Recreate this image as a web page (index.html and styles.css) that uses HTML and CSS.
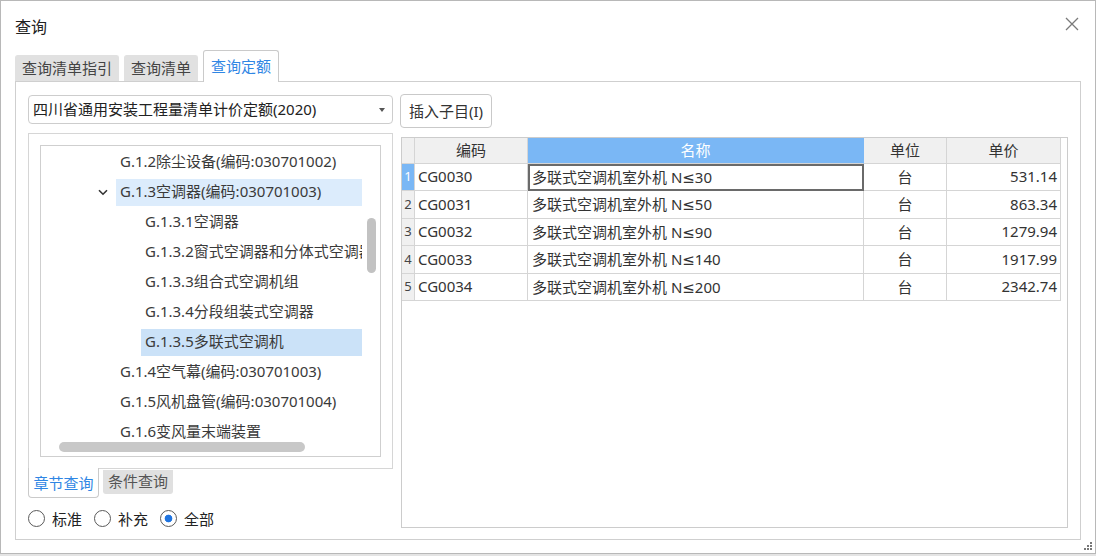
FILE: index.html
```html
<!DOCTYPE html>
<html lang="zh-CN">
<head>
    <meta charset="UTF-8">
    <meta name="viewport" content="width=device-width, initial-scale=1.0">
    <title>查询</title>
    <link rel="stylesheet" href="styles.css">
</head>
<body>
    <div class="dialog">
        <div class="titlebar">
            <span class="title">查询</span>
            <svg class="close" width="14" height="14" viewBox="0 0 14 14">
                <path d="M1 1 L13 13 M13 1 L1 13" stroke="#7a7a7a" stroke-width="1.3" fill="none"/>
            </svg>
        </div>

        <div class="tabs">
            <div class="tab">查询清单指引</div>
            <div class="tab">查询清单</div>
            <div class="tab active">查询定额</div>
        </div>

        <div class="panel">
            <div class="left">
                <div class="select">
                    <span>四川省通用安装工程量清单计价定额(2020)</span>
                    <span class="caret"></span>
                </div>

                <div class="tree-box">
                    <div class="tree">
                        <div class="tree-view">
                            <div class="node lv2"><span class="toggle"></span><span class="label">G.1.2除尘设备(编码:030701002)</span></div>
                            <div class="node lv2">
                                <span class="toggle">
                                    <svg width="10" height="7" viewBox="0 0 10 7"><path d="M1 1.2 L5 5.2 L9 1.2" stroke="#333" stroke-width="1.6" fill="none"/></svg>
                                </span>
                                <span class="label open">G.1.3空调器(编码:030701003)</span>
                            </div>
                            <div class="node lv3"><span class="toggle"></span><span class="label">G.1.3.1空调器</span></div>
                            <div class="node lv3"><span class="toggle"></span><span class="label">G.1.3.2窗式空调器和分体式空调器</span></div>
                            <div class="node lv3"><span class="toggle"></span><span class="label">G.1.3.3组合式空调机组</span></div>
                            <div class="node lv3"><span class="toggle"></span><span class="label">G.1.3.4分段组装式空调器</span></div>
                            <div class="node lv3"><span class="toggle"></span><span class="label selected">G.1.3.5多联式空调机</span></div>
                            <div class="node lv2"><span class="toggle"></span><span class="label">G.1.4空气幕(编码:030701003)</span></div>
                            <div class="node lv2"><span class="toggle"></span><span class="label">G.1.5风机盘管(编码:030701004)</span></div>
                            <div class="node lv2"><span class="toggle"></span><span class="label">G.1.6变风量末端装置</span></div>
                        </div>
                        <div class="vscroll"><div class="thumb"></div></div>
                        <div class="hscroll"></div>
                    </div>
                </div>

                <div class="subtabs">
                    <div class="subtab active">章节查询</div>
                    <div class="subtab">条件查询</div>
                </div>

                <div class="radios">
                    <label class="radio"><span class="dot"></span>标准</label>
                    <label class="radio"><span class="dot"></span>补充</label>
                    <label class="radio"><span class="dot on"></span>全部</label>
                </div>
            </div>

            <div class="right">
                <button class="btn">插入子目(I)</button>
                <div class="grid-box">
                    <div class="grid">
                        <div class="cell head"></div>
                        <div class="cell head">编码</div>
                        <div class="cell head current">名称</div>
                        <div class="cell head">单位</div>
                        <div class="cell head">单价</div>

                        <div class="cell num current">1</div>
                        <div class="cell">CG0030</div>
                        <div class="cell name focus">多联式空调机室外机 N≤30</div>
                        <div class="cell unit">台</div>
                        <div class="cell price">531.14</div>

                        <div class="cell num">2</div>
                        <div class="cell">CG0031</div>
                        <div class="cell name">多联式空调机室外机 N≤50</div>
                        <div class="cell unit">台</div>
                        <div class="cell price">863.34</div>

                        <div class="cell num">3</div>
                        <div class="cell">CG0032</div>
                        <div class="cell name">多联式空调机室外机 N≤90</div>
                        <div class="cell unit">台</div>
                        <div class="cell price">1279.94</div>

                        <div class="cell num">4</div>
                        <div class="cell">CG0033</div>
                        <div class="cell name">多联式空调机室外机 N≤140</div>
                        <div class="cell unit">台</div>
                        <div class="cell price">1917.99</div>

                        <div class="cell num">5</div>
                        <div class="cell">CG0034</div>
                        <div class="cell name">多联式空调机室外机 N≤200</div>
                        <div class="cell unit">台</div>
                        <div class="cell price">2342.74</div>
                    </div>
                </div>
            </div>
        </div>

        <svg class="grip" width="10" height="10" viewBox="0 0 10 10">
            <rect x="7" y="0" width="2" height="2" fill="#777"/>
            <rect x="4" y="3" width="2" height="2" fill="#777"/>
            <rect x="7" y="3" width="2" height="2" fill="#777"/>
            <rect x="1" y="6" width="2" height="2" fill="#777"/>
            <rect x="4" y="6" width="2" height="2" fill="#777"/>
            <rect x="7" y="6" width="2" height="2" fill="#777"/>
        </svg>
    </div>
</body>
</html>
```

FILE: styles.css
```css
* {
    box-sizing: border-box;
}
body {
    margin: 0;
    background: #e4e4e4;
    font-family: "Noto Sans", "DejaVu Sans", "Noto Sans CJK SC", sans-serif;
    font-size: 15px;
    color: #333;
}
.dialog {
    width: 1096px;
    height: 554px;
    background: #fff;
    border: 1px solid #b8b8b8;
    display: flex;
    flex-direction: column;
    position: relative;
}

/* titel */
.titlebar {
    height: 49px;
    flex: none;
    display: flex;
    justify-content: space-between;
    align-items: center;
    padding: 0 16px 0 14px;
}
.title {
    font-size: 16px;
    color: #222;
}
.close {
    align-self: flex-start;
    margin-top: 16px;
}

/* faner */
.tabs {
    height: 31px;
    flex: none;
    display: flex;
    align-items: flex-end;
    padding-left: 14px;
}
.tab {
    height: 26px;
    line-height: 24px;
    padding: 0 6px;
    margin-right: 5px;
    background: #e1e1e1;
    border: 1px solid #e1e1e1;
    border-bottom: none;
    border-radius: 3px 3px 0 0;
    color: #444;
}
.tab.active {
    height: 32px;
    margin-bottom: -1px;
    padding: 2px 7px 0;
    line-height: 27px;
    background: #fff;
    border-color: #cacaca;
    color: #2f86e4;
    position: relative;
    z-index: 1;
}

.panel {
    flex: 1;
    margin: 0 14px 13px;
    border: 1px solid #cfcfcf;
    padding: 13px 12px 11px;
    display: flex;
    gap: 7px;
}

/* venstre side */
.left {
    width: 365px;
    flex: none;
    display: flex;
    flex-direction: column;
}
.select {
    height: 29px;
    border: 1px solid #cdcdcd;
    border-radius: 4px;
    display: flex;
    justify-content: space-between;
    align-items: center;
    padding: 0 7px 2px 4px;
    color: #222;
}
.caret {
    width: 0;
    height: 0;
    margin-top: 2px;
    border-left: 3px solid transparent;
    border-right: 3px solid transparent;
    border-top: 4px solid #555;
}
.tree-box {
    margin-top: 9px;
    height: 336px;
    border: 1px solid #d6d6d6;
    padding: 11px;
}
.tree {
    height: 100%;
    border: 1px solid #cfcfcf;
    display: flex;
    position: relative;
    overflow: hidden;
}
.tree-view {
    flex: 1;
    min-width: 0;
    overflow: hidden;
    padding-top: 1px;
}
.node {
    height: 30px;
    display: flex;
    align-items: center;
    padding-left: 52px;
}
.node.lv3 {
    padding-left: 77px;
}
.toggle {
    width: 20px;
    height: 27px;
    flex: none;
    margin-right: 3px;
    display: flex;
    justify-content: center;
    align-items: center;
}
.label {
    flex: 1;
    min-width: 0;
    height: 27px;
    line-height: 25px;
    padding-left: 4px;
    margin-right: 1px;
    white-space: nowrap;
    overflow: hidden;
    color: #3a3a3a;
}
.label.open {
    background: #dcecfc;
}
.label.selected {
    background: #cbe2f8;
}
.vscroll {
    width: 17px;
    flex: none;
    position: relative;
}
.thumb {
    position: absolute;
    left: 4px;
    top: 72px;
    width: 9px;
    height: 55px;
    border-radius: 5px;
    background: #c2c2c2;
}
.hscroll {
    position: absolute;
    left: 18px;
    top: 296px;
    width: 246px;
    height: 10px;
    border-radius: 5px;
    background: #c8c8c8;
}

.subtabs {
    display: flex;
    align-items: flex-start;
    gap: 4px;
    margin-top: -1px;
    position: relative;
}
.subtab {
    width: 70px;
    height: 24px;
    margin-top: 2px;
    line-height: 22px;
    text-align: center;
    background: #e0e0e0;
    border-radius: 0 0 3px 3px;
    color: #555;
}
.subtab.active {
    width: 71px;
    height: 30px;
    margin-top: 0;
    padding-top: 2px;
    line-height: 26px;
    background: #fff;
    border: 1px solid #cacaca;
    border-top: none;
    border-radius: 0 0 4px 4px;
    color: #2f86e4;
}

.radios {
    height: 20px;
    margin-top: 10px;
    display: flex;
    align-items: center;
}
.radio {
    display: flex;
    align-items: center;
    margin-right: 12px;
    color: #222;
}
.dot {
    width: 17px;
    height: 17px;
    margin-right: 7px;
    border: 1px solid #5a5a5a;
    border-radius: 50%;
    background: #fff;
}
.dot.on {
    background: radial-gradient(circle, #1f74e0 0 3.5px, #fff 4.2px);
}

/* hoejre side */
.right {
    flex: 1;
    display: flex;
    flex-direction: column;
}
.btn {
    align-self: flex-start;
    height: 34px;
    margin-top: -1px;
    padding: 0 8px 2px;
    border: 1px solid #c9c9c9;
    border-radius: 4px;
    background: #fff;
    font: inherit;
    color: #333;
}
.grid-box {
    flex: 1;
    margin: 9px 0 0 1px;
    border: 1px solid #cccccc;
}
.grid {
    display: grid;
    grid-template-columns: 13px 113px 336px 83px 114px;
    grid-template-rows: 26px 27px 28px 27px 28px 27px;
    width: 659px;
}
.cell {
    border-right: 1px solid #d5d5d5;
    border-bottom: 1px solid #d5d5d5;
    display: flex;
    align-items: center;
    padding: 0 0 2px 3px;
    white-space: nowrap;
    overflow: hidden;
}
.cell.head {
    justify-content: center;
    padding-left: 0;
    background: #f0f0f0;
}
.cell.head.current {
    background: #7ab7f5;
    border-right-color: #7ab7f5;
    color: #fff;
}
.cell.num {
    justify-content: center;
    padding-left: 0;
    background: #f0f0f0;
    font-size: 13px;
    color: #444;
}
.cell.num.current {
    background: #7ab7f5;
    color: #fff;
}
.cell.name {
    padding-left: 4px;
}
.cell.focus {
    outline: 2px solid #6a6a6a;
    outline-offset: -2px;
}
.cell.unit {
    justify-content: center;
    padding-left: 0;
}
.cell.price {
    justify-content: flex-end;
    padding-right: 3px;
}

.grip {
    position: absolute;
    right: 2px;
    bottom: 1px;
}
```
